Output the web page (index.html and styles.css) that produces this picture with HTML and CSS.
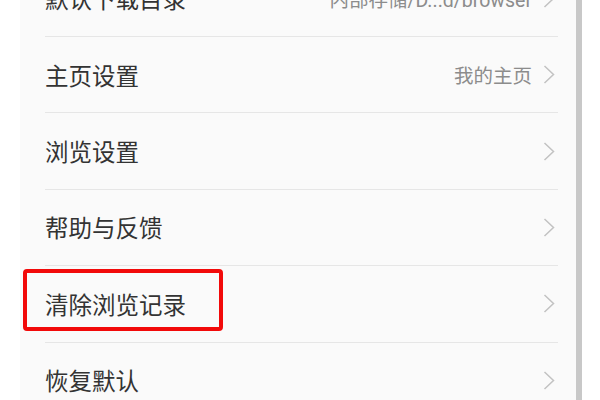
FILE: index.html
```html
<!DOCTYPE html>
<html lang="zh-CN">
<head>
<meta charset="utf-8">
<title>设置</title>
<link rel="stylesheet" href="styles.css">
</head>
<body>
<div class="screen">
  <div class="gutter"></div>
  <div class="panel">
    <ul class="list">
      <li class="row">
        <span class="label">默认下载目录</span>
        <span class="value">内部存储/D...d/browser</span>
        <svg class="chev" viewBox="0 0 12 19" width="12" height="19"><polyline points="1.5,1 10.5,9.5 1.5,18" /></svg>
      </li>
      <li class="row">
        <span class="label">主页设置</span>
        <span class="value">我的主页</span>
        <svg class="chev" viewBox="0 0 12 19" width="12" height="19"><polyline points="1.5,1 10.5,9.5 1.5,18" /></svg>
      </li>
      <li class="row">
        <span class="label">浏览设置</span>
        <svg class="chev" viewBox="0 0 12 19" width="12" height="19"><polyline points="1.5,1 10.5,9.5 1.5,18" /></svg>
      </li>
      <li class="row">
        <span class="label">帮助与反馈</span>
        <svg class="chev" viewBox="0 0 12 19" width="12" height="19"><polyline points="1.5,1 10.5,9.5 1.5,18" /></svg>
      </li>
      <li class="row">
        <span class="label">清除浏览记录</span>
        <svg class="chev" viewBox="0 0 12 19" width="12" height="19"><polyline points="1.5,1 10.5,9.5 1.5,18" /></svg>
        <div class="highlight"></div>
      </li>
      <li class="row">
        <span class="label">恢复默认</span>
        <svg class="chev" viewBox="0 0 12 19" width="12" height="19"><polyline points="1.5,1 10.5,9.5 1.5,18" /></svg>
      </li>
    </ul>
  </div>
  <div class="scrollbar"></div>
</div>
</body>
</html>
```
FILE: styles.css
```css
html, body {
  margin: 0;
  padding: 0;
  background: #ffffff;
}

.screen {
  display: flex;
  width: 600px;
  height: 400px;
  overflow: hidden;
  background: #ffffff;
  font-family: Roboto, "Noto Sans CJK SC", sans-serif;
}

.gutter {
  width: 20px;
  flex: none;
}

.panel {
  width: 556px;
  flex: none;
  background: #fafafa;
  padding: 0 18px 0 25px;
  box-sizing: border-box;
}

.scrollbar {
  width: 6px;
  flex: none;
  background: #c8c8c8;
}

.list {
  list-style: none;
  margin: -39.4px 0 0 0;
  padding: 0;
}

.row {
  position: relative;
  display: flex;
  align-items: center;
  height: 75.4px;
  border-bottom: 1px solid #e6e6e6;
}

.label {
  flex: 1;
  font-size: 23.5px;
  color: #333333;
  white-space: nowrap;
}

.value {
  font-size: 19.5px;
  color: #8c8c8c;
  margin-right: 11px;
  white-space: nowrap;
}

.chev {
  flex: none;
  margin-right: 3px;
}

.chev polyline {
  fill: none;
  stroke: #c2c2c2;
  stroke-width: 1.5;
}

.highlight {
  position: absolute;
  left: -22.5px;
  top: 3px;
  width: 200.5px;
  height: 62px;
  box-sizing: border-box;
  border: 4px solid #f20a0a;
  border-radius: 4px;
}
```
